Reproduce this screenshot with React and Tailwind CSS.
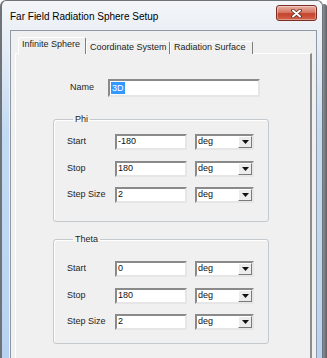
import React from "react";

// sunken classic edit box
const Field = ({ value, width, height = "h-[16px]" }) => (
  <div
    className={`${width} ${height} bg-white border-2 border-t-[#8a8a8a] border-l-[#8a8a8a] border-r-[#e6e6e6] border-b-[#e6e6e6] flex items-center pl-[1px] text-[9px] text-[#111]`}
  >
    {value}
  </div>
);

const Combo = ({ value }) => (
  <div className="w-[59px] h-[16px] bg-white border-2 border-t-[#8a8a8a] border-l-[#8a8a8a] border-r-[#e6e6e6] border-b-[#e6e6e6] flex items-stretch text-[9px] text-[#111]">
    <div className="flex-1 flex items-center pl-[1px]">{value}</div>
    <div className="w-[14px] bg-[#ececec] border border-t-white border-l-white border-r-[#7a7a7a] border-b-[#7a7a7a] flex items-center justify-center">
      <svg width="7" height="4" viewBox="0 0 7 4">
        <path d="M0 0h7L3.5 4z" fill="#111" />
      </svg>
    </div>
  </div>
);

const Row = ({ label, value, className }) => (
  <div className={`flex items-center h-[16px] ${className}`}>
    <div className="w-[48px] text-[9px] text-[#1e1e1e]">{label}</div>
    <Field value={value} width="w-[72px]" />
    <div className="w-[8px]" />
    <Combo value="deg" />
  </div>
);

const Group = ({ title, rows, className }) => (
  <fieldset
    className={`ml-[37px] w-[216px] border border-[#c4c9cd] rounded-[3px] shadow-[inset_1px_1px_0_#fff] pl-[13px] ${className}`}
  >
    <legend className="ml-[6px] px-[2px] text-[9px] leading-[11px] text-[#1e1e1e]">{title}</legend>
    {rows}
  </fieldset>
);

const tabs = [
  { name: "Infinite Sphere", w: "w-[68px]", active: true },
  { name: "Coordinate System", w: "w-[84px]" },
  { name: "Radiation Surface", w: "w-[83px]" },
];

export default function App() {
  return (
    <div className="w-[327px] h-[358px] flex items-start bg-white overflow-hidden font-['Liberation_Sans',Arial,sans-serif]">
      {/* window */}
      <div className="w-[323px] shrink-0 flex flex-col rounded-t-[6px] border-l-2 border-t border-r border-[#6e7378] bg-[linear-gradient(180deg,#f3f5f8_0px,#e8eef5_40px,#c3daf3_130px,#b6d2f1_100%)]">
        {/* title bar */}
        <div className="h-[28px] shrink-0 flex items-start justify-between">
          <div className="mt-[10px] ml-[8px] text-[10px] leading-[12px] text-black">
            Far Field Radiation Sphere Setup
          </div>
          <div className="mt-[4px] mr-[5px] w-[41px] h-[16px] rounded-[3px] border border-[#7a2e24] bg-[linear-gradient(180deg,#eab1a3_0%,#d67a66_45%,#c5432c_55%,#d2644c_100%)] shadow-[inset_0_0_0_1px_rgba(255,255,255,0.35)] flex items-center justify-center">
            <svg width="11" height="9" viewBox="0 0 11 9">
              <path d="M2 1.5l7 6M9 1.5l-7 6" stroke="#5a2a24" strokeWidth="3.6" strokeLinecap="round" />
              <path d="M2 1.5l7 6M9 1.5l-7 6" stroke="#fff" strokeWidth="2" strokeLinecap="round" />
            </svg>
          </div>
        </div>

        {/* body */}
        <div className="shrink-0 flex pl-[7px] pr-[5px]">
          <div className="w-[308px] border-l border-t border-[#eef2f7]">
            <div className="border-l border-t border-r border-[#8e99a5] bg-[#f0f0f0] px-[4px] pt-[6px]">
              {/* tabs */}
              <div className="flex items-end pl-[3px] -mb-px relative z-10">
                {tabs.map((t) => (
                  <div
                    key={t.name}
                    className={`${t.w} ${
                      t.active ? "h-[17px] pb-[2px]" : "h-[13px]"
                    } bg-[#f0f0f0] border-t border-l border-r border-t-white border-l-white border-r-[#7d7d7d] rounded-t-[2px] flex items-center pl-[3px] text-[9px] text-[#1e1e1e] whitespace-nowrap`}
                  >
                    {t.name}
                  </div>
                ))}
              </div>

              {/* tab panel */}
              <div className="h-[340px] border border-t-white border-l-white border-r-2 border-r-[#8c8c8c] border-b-[#8c8c8c] pt-[25px]">
                <div className="flex items-center pl-[54px]">
                  <div className="w-[38px] text-[9px] text-[#1e1e1e]">Name</div>
                  <div className="w-[152px] h-[18px] bg-white border-2 border-t-[#8a8a8a] border-l-[#8a8a8a] border-r-[#e6e6e6] border-b-[#e6e6e6] flex items-center pl-[1px]">
                    <span className="bg-[#3399ff] text-white text-[9px] leading-[12px] px-[1px]">3D</span>
                  </div>
                </div>

                <Group
                  title="Phi"
                  className="mt-[17px] h-[108px]"
                  rows={
                    <>
                      <Row label="Start" value="-180" className="mt-[9px]" />
                      <Row label="Stop" value="180" className="mt-[11px]" />
                      <Row label="Step Size" value="2" className="mt-[10px]" />
                    </>
                  }
                />

                <Group
                  title="Theta"
                  className="mt-[12px] h-[110px]"
                  rows={
                    <>
                      <Row label="Start" value="0" className="mt-[16px]" />
                      <Row label="Stop" value="180" className="mt-[11px]" />
                      <Row label="Step Size" value="2" className="mt-[10px]" />
                    </>
                  }
                />
              </div>
            </div>
          </div>
        </div>
      </div>
      {/* shadow strip */}
      <div className="w-[4px] h-full mt-[4px] bg-[linear-gradient(90deg,#8a8f96,#5d6166)] rounded-tr-[3px]" />
    </div>
  );
}
